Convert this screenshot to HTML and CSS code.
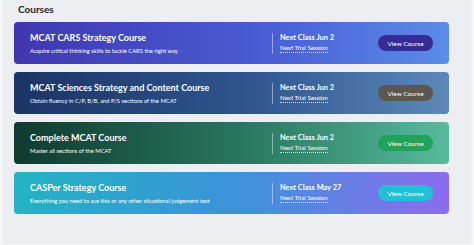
FILE: index.html
```html
<!DOCTYPE html>
<html lang="en">

<head>
    <meta charset="UTF-8">
    <meta name="viewport" content="width=device-width, initial-scale=1.0">
    <title>Courses</title>
    <link rel="stylesheet" href="styles.css">
</head>

<body>
    <main class="panel">
        <h2 class="panel-title">Courses</h2>

        <div class="course course-cars">
            <div class="course-main">
                <h3>MCAT CARS Strategy Course</h3>
                <p>Acquire critical thinking skills to tackle CARS the right way</p>
            </div>
            <div class="course-info">
                <div class="next-class">Next Class Jun 2</div>
                <div class="next-trial">Next Trial Session</div>
            </div>
            <button class="course-btn">View Course</button>
        </div>

        <div class="course course-sciences">
            <div class="course-main">
                <h3>MCAT Sciences Strategy and Content Course</h3>
                <p>Obtain fluency in C/P, B/B, and P/S sections of the MCAT</p>
            </div>
            <div class="course-info">
                <div class="next-class">Next Class Jun 2</div>
                <div class="next-trial">Next Trial Session</div>
            </div>
            <button class="course-btn">View Course</button>
        </div>

        <div class="course course-complete">
            <div class="course-main">
                <h3>Complete MCAT Course</h3>
                <p>Master all sections of the MCAT</p>
            </div>
            <div class="course-info">
                <div class="next-class">Next Class Jun 2</div>
                <div class="next-trial">Next Trial Session</div>
            </div>
            <button class="course-btn">View Course</button>
        </div>

        <div class="course course-casper">
            <div class="course-main">
                <h3>CASPer Strategy Course</h3>
                <p>Everything you need to ace this or any other situational judgement test</p>
            </div>
            <div class="course-info">
                <div class="next-class">Next Class May 27</div>
                <div class="next-trial">Next Trial Session</div>
            </div>
            <button class="course-btn">View Course</button>
        </div>
    </main>
</body>

</html>
```

FILE: styles.css
```css
* {
    font-family: Lato, "Open Sans", sans-serif;
    box-sizing: border-box;
}

body {
    margin: 0;
    background-color: #f5f6f8;
    height: 245px;
    overflow: hidden;
}

.panel {
    margin: 0 3px;
    height: 244px;
    background-color: #eceef1;
    padding: 2px 22px 0 11px;
}

.panel-title {
    margin: 0 0 5px 4px;
    font-size: 10px;
    line-height: 15px;
    font-weight: 700;
    color: #1f2430;
}

.course {
    display: flex;
    align-items: center;
    height: 42px;
    margin-bottom: 8px;
    border-radius: 4px;
    padding: 0 16px;
    color: white;
}

.course-main {
    flex: 1;
    padding-top: 1px;
}

.course-main h3 {
    margin: 0 0 3px 0;
    font-size: 9px;
    line-height: 12px;
    font-weight: 700;
}

.course-main p {
    margin: 0;
    font-size: 5.8px;
    line-height: 8px;
}

.course-info {
    width: 106px;
    border-left: 1px solid rgba(255, 255, 255, 0.45);
    padding-left: 7px;
    height: 21px;
    display: flex;
    flex-direction: column;
    align-items: flex-start;
}

.next-class {
    font-size: 7.4px;
    line-height: 10px;
    font-weight: 700;
}

.next-trial {
    font-size: 6.2px;
    line-height: 9px;
    border-bottom: 1px dotted rgba(255, 255, 255, 0.8);
}

.course-btn {
    width: 55px;
    height: 16px;
    border: none;
    border-radius: 8px;
    color: white;
    font-size: 6.5px;
    padding: 0;
}

.course-cars {
    background: linear-gradient(90deg, #4037b0, #4a5fd6 60%, #5a8de8);
}

.course-cars .course-btn {
    background-color: #372c95;
}

.course-sciences {
    background: linear-gradient(90deg, #1b3464, #2f5690 55%, #5d89b9);
}

.course-sciences .course-btn {
    background-color: #5b5650;
}

.course-complete {
    background: linear-gradient(90deg, #0f3a2f, #2a7a63 55%, #57bb9d);
}

.course-complete .course-btn {
    background-color: #22a35c;
}

.course-casper {
    background: linear-gradient(90deg, #21b4c3, #3b93d9 50%, #8c6cf0);
}

.course-casper .course-btn {
    background-color: #22bfd6;
}
```
